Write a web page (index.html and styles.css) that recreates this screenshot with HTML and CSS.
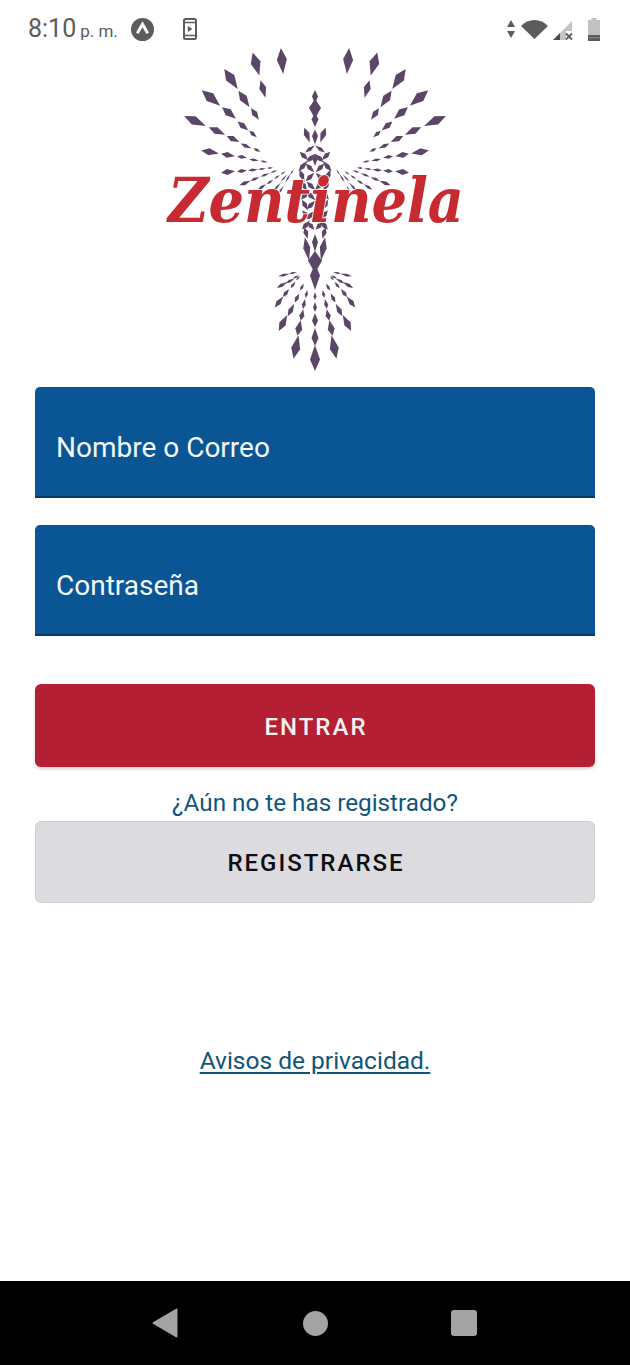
FILE: index.html
```html
<!DOCTYPE html>
<html lang="es">
<head>
<meta charset="utf-8">
<title>Zentinela</title>
<link rel="stylesheet" href="styles.css">
</head>
<body>
<div class="phone">
  <header class="statusbar">
    <div class="status-left">
      <span class="time">8:10</span><span class="ampm">p. m.</span>
      <svg class="ic-a" viewBox="0 0 24 24"><circle cx="12" cy="12" r="12" fill="#5c5c5c"/><path d="M6.5 16 12 6.5 17.5 16" fill="none" stroke="#fff" stroke-width="3"/></svg>
      <svg class="ic-app" viewBox="0 0 14 22"><rect x="1" y="1" width="12" height="20" rx="1.5" fill="none" stroke="#5c5c5c" stroke-width="2"/><path d="M1 4.5h12M1 17.5h12" stroke="#5c5c5c" stroke-width="1.5"/><path d="M4.8 8 9.5 11 4.8 14z" fill="#5c5c5c"/></svg>
    </div>
    <div class="status-right">
      <svg class="ic-arrows" viewBox="0 0 8 18"><path d="M4 0 8 7H0zM0 11h8l-4 7z" fill="#5c5c5c"/></svg>
      <svg class="ic-wifi" viewBox="0 0 27 19"><path d="M0 6C7-2 20-2 27 6L13.500 19z" fill="#5c5c5c"/></svg>
      <svg class="ic-signal" viewBox="0 0 20 19"><path d="M0 19 19 0V10H13V19z" fill="#c4c4c4"/><path d="M0 19 7 12V19z" fill="#4c4c4c"/><path d="M13 12.500 19 18.500M19 12.500 13 18.500" stroke="#5c5c5c" stroke-width="1.800"/></svg>
      <svg class="ic-battery" viewBox="0 0 12 23"><path d="M3.500 0H8.500V2H12V23H0V2H3.500z" fill="#c2c2c2"/><rect y="17" width="12" height="6" fill="#5c5c5c"/><rect y="19.200" width="12" height="1" fill="#8c8c8c"/></svg>
    </div>
  </header>

  <main class="content">
    <svg class="logo" viewBox="160 40 310 335" role="img" aria-label="Zentinela">
      <defs>
        <polygon id="d" points="-1,0 -.12,-1 1,0 -.12,1"/>
        <g id="half">
          <use href="#d" transform="translate(282 61) rotate(85) scale(13 5)"/>
          <use href="#d" transform="translate(256 64) rotate(74) scale(12 5)"/>
          <use href="#d" transform="translate(263 89) rotate(74) scale(9 3.500)"/>
          <use href="#d" transform="translate(231 79) rotate(56) scale(12 5)"/>
          <use href="#d" transform="translate(244 99) rotate(56) scale(10 4)"/>
          <use href="#d" transform="translate(255 114) rotate(56) scale(7 3)"/>
          <use href="#d" transform="translate(211 98) rotate(40) scale(12 5)"/>
          <use href="#d" transform="translate(229 113) rotate(40) scale(9 4)"/>
          <use href="#d" transform="translate(243 126) rotate(40) scale(7 3)"/>
          <use href="#d" transform="translate(253 134) rotate(40) scale(5 2)"/>
          <use href="#d" transform="translate(195 121) rotate(25) scale(12 4.500)"/>
          <use href="#d" transform="translate(217 131) rotate(25) scale(9 3.500)"/>
          <use href="#d" transform="translate(233 139) rotate(25) scale(7 3)"/>
          <use href="#d" transform="translate(246 146) rotate(25) scale(6 2)"/>
          <use href="#d" transform="translate(257 150) rotate(25) scale(4 1.500)"/>
          <use href="#d" transform="translate(210 152) rotate(10) scale(9 3.500)"/>
          <use href="#d" transform="translate(228 155) rotate(10) scale(7 3)"/>
          <use href="#d" transform="translate(242 157) rotate(10) scale(5 2)"/>
          <use href="#d" transform="translate(254 160) rotate(10) scale(5 1.500)"/>
          <use href="#d" transform="translate(264 161.500) rotate(10) scale(4 1)"/>
          <use href="#d" transform="translate(228 172) rotate(-6) scale(7 3)"/>
          <use href="#d" transform="translate(242 171) rotate(-6) scale(5 2)"/>
          <use href="#d" transform="translate(253 170) rotate(-6) scale(5 1.500)"/>
          <use href="#d" transform="translate(262 169) rotate(-6) scale(4 1)"/>
          <use href="#d" transform="translate(270 168) rotate(-6) scale(3 1)"/>
          <use href="#d" transform="translate(245 183) rotate(-21) scale(6 2)"/>
          <use href="#d" transform="translate(255 179) rotate(-21) scale(5 1.500)"/>
          <use href="#d" transform="translate(265 175) rotate(-21) scale(5 1.200)"/>
          <use href="#d" transform="translate(274 171.500) rotate(-21) scale(3.500 1)"/>
          <use href="#d" transform="translate(262 187) rotate(-33) scale(5 1.500)"/>
          <use href="#d" transform="translate(270 182) rotate(-33) scale(4 1.200)"/>
          <use href="#d" transform="translate(277 177) rotate(-33) scale(3.500 1)"/>
          <use href="#d" transform="translate(283 173) rotate(-33) scale(3 .8)"/>
          <use href="#d" transform="translate(277 187) rotate(-48) scale(6 1)"/>
          <use href="#d" transform="translate(284 178) rotate(-48) scale(5 .8)"/>
          <use href="#d" transform="translate(281 190) rotate(-58) scale(5 1)"/>
          <use href="#d" transform="translate(288 178) rotate(-58) scale(5 .8)"/>
          <use href="#d" transform="translate(292 172) rotate(-58) scale(3 .7)"/>
          <use href="#d" transform="translate(307 135) rotate(70) scale(8 3)"/>
          <use href="#d" transform="translate(310 149) rotate(-35) scale(6 2)"/>
          <use href="#d" transform="translate(304 156) rotate(45) scale(6 2.500)"/>
          <use href="#d" transform="translate(311 158) rotate(-45) scale(6 2.500)"/>
          <use href="#d" transform="translate(303 166) rotate(-50) scale(7 2.500)"/>
          <use href="#d" transform="translate(310 168) rotate(45) scale(6 2.500)"/>
          <use href="#d" transform="translate(302 176) rotate(70) scale(7 2.500)"/>
          <use href="#d" transform="translate(310 177) rotate(-45) scale(6 2.500)"/>
          <use href="#d" transform="translate(304 186) rotate(60) scale(6 2.500)"/>
          <use href="#d" transform="translate(311 186) rotate(45) scale(6 2.500)"/>
          <use href="#d" transform="translate(305 195) rotate(-50) scale(6 2.500)"/>
          <use href="#d" transform="translate(311 196) rotate(45) scale(6 2.500)"/>
          <use href="#d" transform="translate(305 205) rotate(60) scale(6 2.500)"/>
          <use href="#d" transform="translate(311 205) rotate(-45) scale(6 2.500)"/>
          <use href="#d" transform="translate(306 215) rotate(50) scale(6 2.500)"/>
          <use href="#d" transform="translate(311 215) rotate(-45) scale(6 2.500)"/>
          <use href="#d" transform="translate(306 225) rotate(-50) scale(6 2.500)"/>
          <use href="#d" transform="translate(311 226) rotate(50) scale(5 2.500)"/>
          <use href="#d" transform="translate(306 233) rotate(75) scale(6 2.500)"/>
          <use href="#d" transform="translate(307 249) rotate(80) scale(12 3.500)"/>
          <use href="#d" transform="translate(296 347) rotate(-78) scale(12 4.500)"/>
          <use href="#d" transform="translate(299 328) rotate(-78) scale(8 3.500)"/>
          <use href="#d" transform="translate(302 315) rotate(-78) scale(6 2.500)"/>
          <use href="#d" transform="translate(304 304) rotate(-78) scale(5 2)"/>
          <use href="#d" transform="translate(306.500 294) rotate(-78) scale(4 1.500)"/>
          <use href="#d" transform="translate(283 323) rotate(-62) scale(9 3.500)"/>
          <use href="#d" transform="translate(291 310) rotate(-62) scale(7 2.500)"/>
          <use href="#d" transform="translate(297 298) rotate(-62) scale(5 2)"/>
          <use href="#d" transform="translate(302 287) rotate(-62) scale(4 1.500)"/>
          <use href="#d" transform="translate(279 302) rotate(-52) scale(7 2.500)"/>
          <use href="#d" transform="translate(286 293) rotate(-52) scale(5 2)"/>
          <use href="#d" transform="translate(293 285) rotate(-52) scale(4 1.500)"/>
          <use href="#d" transform="translate(298 278) rotate(-52) scale(3 1)"/>
          <use href="#d" transform="translate(282 285) rotate(-30) scale(6 1.800)"/>
          <use href="#d" transform="translate(290 281) rotate(-30) scale(5 1.500)"/>
          <use href="#d" transform="translate(296 277) rotate(-30) scale(3.500 1)"/>
          <use href="#d" transform="translate(284 275) rotate(-12) scale(6 1.500)"/>
          <use href="#d" transform="translate(293 273) rotate(-12) scale(4 1)"/>
        </g>
      </defs>
      <g class="logo-mark">
        <use href="#half"/>
        <use href="#half" transform="translate(630 0) scale(-1 1)"/>
        <use href="#d" transform="translate(315 97) rotate(90) scale(7 3)"/>
        <use href="#d" transform="translate(315 109) rotate(90) scale(10 6)"/>
        <use href="#d" transform="translate(315 120) rotate(90) scale(7 3.500)"/>
        <use href="#d" transform="translate(315 137) rotate(90) scale(7.500 3)"/>
        <use href="#d" transform="translate(315 160) rotate(90) scale(6 2.500)"/>
        <use href="#d" transform="translate(315 243) rotate(90) scale(9 3)"/>
        <use href="#d" transform="translate(315 262) rotate(90) scale(11 7)"/>
        <use href="#d" transform="translate(315 277) rotate(90) scale(13 5)"/>
        <use href="#d" transform="translate(315 296) rotate(-90) scale(4 1.500)"/>
        <use href="#d" transform="translate(315 307) rotate(-90) scale(5 2)"/>
        <use href="#d" transform="translate(315 320) rotate(-90) scale(7 3)"/>
        <use href="#d" transform="translate(315 337) rotate(-90) scale(9 3.500)"/>
        <use href="#d" transform="translate(315 358) rotate(-90) scale(13 5)"/>
      </g>
      <text class="logo-text" x="168" y="222" textLength="296">Zentinela</text>
    </svg>

    <form class="form">
      <input class="field" type="text" placeholder="Nombre o Correo">
      <input class="field" type="password" placeholder="Contraseña">
      <button class="btn btn-primary" type="button">ENTRAR</button>
      <p class="hint">¿Aún no te has registrado?</p>
      <button class="btn btn-secondary" type="button">REGISTRARSE</button>
    </form>

    <a class="privacy" href="#">Avisos de privacidad.</a>
  </main>

  <nav class="navbar">
    <svg class="nav-back" viewBox="0 0 26 30"><path d="M24.500 1.500V28.500L1.500 15z" fill="#a3a3a3" stroke="#a3a3a3" stroke-width="2" stroke-linejoin="round"/></svg>
    <span class="nav-home"></span>
    <span class="nav-recent"></span>
  </nav>
</div>
</body>
</html>
```

FILE: styles.css
```css
* { box-sizing: border-box; }

html, body {
  margin: 0;
  padding: 0;
  background: #fff;
}

.phone {
  width: 630px;
  height: 1365px;
  display: flex;
  flex-direction: column;
  overflow: hidden;
  font-family: Roboto, "Liberation Sans", sans-serif;
}

.statusbar {
  height: 40px;
  flex: none;
  display: flex;
  justify-content: space-between;
  align-items: flex-start;
  padding: 17px 30px 0 28px;
}

.status-left, .status-right {
  display: flex;
  align-items: center;
  height: 24px;
}

.time {
  font-size: 25px;
  line-height: 26px;
  color: #5c5c5c;
}

.ampm {
  font-size: 17px;
  line-height: 26px;
  color: #5c5c5c;
  margin: 3px 0 0 4px;
}

.ic-a { width: 23px; height: 23px; margin-left: 13px; }
.ic-app { width: 14px; height: 22px; margin-left: 29px; }
.ic-arrows { width: 8px; height: 18px; margin-right: 1px; }
.ic-wifi { width: 27px; height: 19px; margin-left: 5px; }
.ic-signal { width: 20px; height: 19px; margin: 2px 0 0 5px; }
.ic-battery { width: 12px; height: 23px; margin-left: 15px; }

.content {
  flex: 1;
  display: flex;
  flex-direction: column;
  align-items: center;
}

.logo {
  width: 310px;
  height: 335px;
  flex: none;
  display: block;
}

.logo-mark { fill: #5c4668; }

.logo-text {
  font-family: "DejaVu Serif", "Liberation Serif", serif;
  font-style: italic;
  font-weight: 700;
  font-stretch: condensed;
  font-size: 62px;
  fill: #c72a30;
  stroke: #fff;
  stroke-width: 1.500px;
  paint-order: stroke;
}

.form {
  width: 560px;
  margin-top: 12px;
  display: flex;
  flex-direction: column;
}

.field {
  width: 100%;
  height: 111px;
  margin-bottom: 27px;
  padding: 12px 21px 0;
  border: 0;
  border-bottom: 2px solid #063a63;
  border-radius: 5px 5px 0 0;
  background: #0a5694;
  color: #fff;
  font-family: inherit;
  font-size: 28px;
  outline: none;
}

.field::placeholder {
  color: #f4f8fb;
  opacity: 1;
}

.btn {
  width: 100%;
  border-radius: 6px;
  font-family: inherit;
  font-size: 24px;
  font-weight: 500;
  letter-spacing: 2px;
  padding: 2px 0 0 2px;
}

.btn-primary {
  height: 83px;
  margin-top: 21px;
  border: 0;
  background: #b41f33;
  color: #f6f1f1;
  box-shadow: 0 2px 3px rgba(0, 0, 0, .18);
}

.btn-secondary {
  height: 82px;
  border: 1px solid #cfcfd3;
  background: #dcdbe0;
  color: #0e0e10;
}

.hint {
  margin: 21px 0 3px;
  text-align: center;
  font-size: 24.250px;
  line-height: 30px;
  color: #11557c;
}

.privacy {
  margin-top: 143px;
  font-size: 24.500px;
  line-height: 30px;
  color: #0f5578;
  text-decoration: underline;
  text-underline-offset: 3px;
}

.navbar {
  height: 84px;
  flex: none;
  background: #000;
  display: flex;
  align-items: center;
  padding: 0 153px 0 152px;
  justify-content: space-between;
}

.nav-back { width: 26px; height: 30px; }

.nav-home {
  width: 25px;
  height: 25px;
  margin-left: 1px;
  border-radius: 50%;
  background: #a3a3a3;
}

.nav-recent {
  width: 26px;
  height: 26px;
  border-radius: 3px;
  background: #a3a3a3;
}
```
